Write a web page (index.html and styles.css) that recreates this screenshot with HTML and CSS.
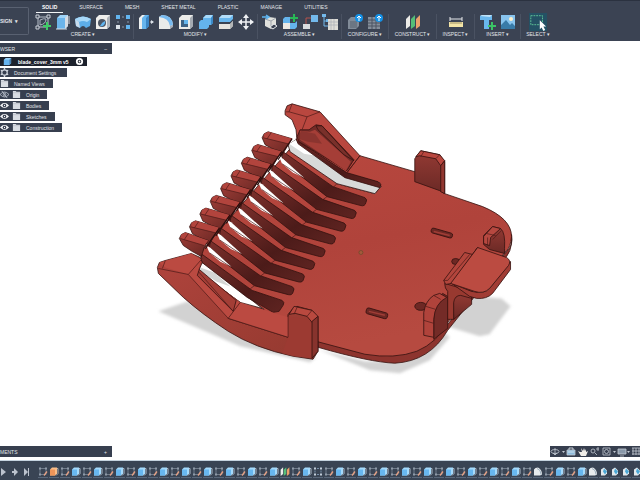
FILE: index.html
```html
<!DOCTYPE html>
<html lang="en">
<head>
<meta charset="utf-8">
<title>blade_cover_3mm v5</title>
<link rel="stylesheet" href="styles.css">
</head>
<body>
<svg class="defs" aria-hidden="true">
  <defs>
    <linearGradient id="plateFill" x1="0" y1="0" x2="0.3" y2="1"><stop offset="0" stop-color="#b9483f"/><stop offset="0.55" stop-color="#b0433b"/><stop offset="1" stop-color="#b64a40"/></linearGradient>
    <linearGradient id="sideFill" x1="0" y1="0" x2="1" y2="1"><stop offset="0" stop-color="#7c302c"/><stop offset="0.6" stop-color="#4c1b19"/><stop offset="1" stop-color="#5f2421"/></linearGradient>
    <linearGradient id="postFill" x1="0" y1="0" x2="0" y2="1"><stop offset="0" stop-color="#943a34"/><stop offset="1" stop-color="#6a2925"/></linearGradient>
    <linearGradient id="toothFill" x1="0" y1="0" x2="1" y2="1"><stop offset="0" stop-color="#a03e38"/><stop offset="1" stop-color="#662622"/></linearGradient>
    <linearGradient id="armFill" x1="0" y1="0" x2="1" y2="1"><stop offset="0" stop-color="#b0443d"/><stop offset="1" stop-color="#93392f"/></linearGradient>
    <filter id="soft" x="-10%" y="-20%" width="120%" height="140%"><feGaussianBlur stdDeviation="1.5"/></filter>

    <symbol id="sketch" viewBox="0 0 16 16"><path d="M3 3H13V13H3Z" fill="none" stroke="#b9c0cb"/><path d="M5 11V6Q9 4 11 5Q11 10 5 11Z" fill="none" stroke="#aab2be"/><path d="M1 1h3v3H1zM12 1h3v3h-3zM1 12h3v3H1z" fill="#3b4353" stroke="#cbd0d8"/><path d="M12 8v8M8 12h8" stroke="#3fcb67" stroke-width="2"/></symbol>
    <symbol id="extrude" viewBox="0 0 16 16"><path d="M2 4L5 1H13V12L10 15H2Z" fill="#9ed3f7"/><path d="M2 4H10V15H2Z" fill="#6bb4ea"/><path d="M10 4L13 1V12L10 15Z" fill="#d5dce4"/><path d="M1 15H12M14 2V10" stroke="#d9dfe7"/></symbol>
    <symbol id="revolve" viewBox="0 0 16 16"><path d="M0 5Q8 0 16 5L15 12L11 14Q8 10 5 14L1 12Z" fill="#5dade8"/><path d="M0 5Q8 0 16 5L12 8Q8 6 4 8Z" fill="#a7d8f8"/><path d="M0 5L4 8L5 14L1 12Z" fill="#c9dcec"/></symbol>
    <symbol id="hole" viewBox="0 0 16 16"><path d="M1 4L4 1H15V12L12 15H1Z" fill="#eeeeec"/><path d="M12 4L15 1V12L12 15Z" fill="#aeb4bb"/><circle cx="7" cy="9" r="4" fill="#4d5664"/><path d="M5 12a4 4 0 0 0 5-5Q7 8 5 12" fill="#62b5ef"/></symbol>
    <symbol id="pattern" viewBox="0 0 16 16"><path d="M3 3H13M3 13H13M3 3V13M13 3V13" stroke="#8d98a8" stroke-dasharray="2 2"/><path d="M1 1h4v4H1zM11 1h4v4h-4zM11 11h4v4h-4z" fill="#63b5ef"/><path d="M1 11h4v4H1z" fill="#dce2e9"/></symbol>
    <symbol id="presspull" viewBox="0 0 16 16"><path d="M1 4L4 1H7V12L4 15H1Z" fill="#ecefef"/><path d="M4 4L7 1H11V12L8 15H4Z" fill="#67b5ed"/><path d="M8 4L11 1V12L8 15Z" fill="#3b86c6"/><path d="M12 8h3" stroke="#dce2e9"/><path d="M13 6l3 2l-3 2z" fill="#dce2e9"/></symbol>
    <symbol id="fillet" viewBox="0 0 16 16"><path d="M1 3L4 1Q14 1 15 11L12 15H1Z" fill="#e9ebea"/><path d="M1 3L4 1Q14 1 15 11L12 12Q11 4 1 3Z" fill="#77baf0"/><path d="M12 12L15 11V13L12 15Z" fill="#a6adb7"/></symbol>
    <symbol id="shell" viewBox="0 0 16 16"><path d="M1 4L4 1H15V12L12 15H1Z" fill="#ecece9"/><path d="M12 4L15 1V12L12 15Z" fill="#a5abb2"/><path d="M3 6H10V13H3Z" fill="#3e6385"/><path d="M6 6H10V10H6Z" fill="#67b7ed"/></symbol>
    <symbol id="combine" viewBox="0 0 16 16"><path d="M5 4L8 1H15V9L13 11H11V13L9 15H1V8L3 6H5Z" fill="#64b4ed"/><path d="M5 4L8 1H15L13 4Z" fill="#a8d9f9"/><path d="M13 4L15 1V9L13 11Z" fill="#3b8ac8"/></symbol>
    <symbol id="offset" viewBox="0 0 16 16"><path d="M1 4L4 1H15V5L12 8H1Z" fill="#69b7ee"/><path d="M1 4L4 1H15L12 4Z" fill="#b3ddf8"/><path d="M1 10H12L15 7V12L12 15H1Z" fill="#e6e4df"/><path d="M12 10L15 7V12L12 15Z" fill="#b3b5b6"/></symbol>
    <symbol id="move" viewBox="0 0 16 16"><path d="M8 2V14M2 8H14" stroke="#eff1f4" stroke-width="1.5"/><path d="M8 0l3 4H5zM8 16l3-4H5zM0 8l4-3v6zM16 8l-4-3v6z" fill="#eff1f4"/></symbol>
    <symbol id="joint" viewBox="0 0 16 16"><path d="M3 5L7 3L14 4V11L9 15L3 12Z" fill="#e0e1dd"/><path d="M3 5L9 7L14 4M9 7V14" fill="none" stroke="#9da3ab"/><path d="M0 3h6M4 1l3 2l-3 2" fill="none" stroke="#5fb5f0" stroke-width="1.5"/><path d="M8 13l4-3l3 2l-4 3z" fill="#3b4353" stroke="#e5e8eb"/></symbol>
    <symbol id="newcomp" viewBox="0 0 16 16"><path d="M1 5L3 3H8V9H13L15 7V13L13 15H1Z" fill="#65b4ec"/><path d="M1 9H8V15H1Z" fill="#ece9e3"/><path d="M12 0V8M8 4H16" stroke="#29b856" stroke-width="2"/></symbol>
    <symbol id="link" viewBox="0 0 16 16"><path d="M4 11V4H9" fill="none" stroke="#b5524c"/><path d="M9 1h7v7H9z" fill="#73b9eb"/><path d="M1 10h7v5H1z" fill="#d9dce0"/></symbol>
    <symbol id="bom" viewBox="0 0 16 16"><path d="M2 2V12H6M2 7H6" fill="none" stroke="#73b9eb"/><path d="M0 0h4v3H0zM4 5h3v3H4z" fill="#73b9eb"/><path d="M6 5h10v11H6z" fill="#deddd7"/><path d="M6 8H16M6 11H16M9 5V16M12 5V16" stroke="#a9aeb4" stroke-width=".7"/></symbol>
    <symbol id="config" viewBox="0 0 16 16"><path d="M1 6L4 3H12V12L9 15H1Z" fill="#818b98"/><path d="M3 7H10V14H3Z" fill="#6c7683"/><circle cx="12" cy="4" r="4" fill="#1591e6"/><path d="M12 7V2M10 4l2-2l2 2" fill="none" stroke="#fff"/></symbol>
    <symbol id="table" viewBox="0 0 16 16"><path d="M1 3H13V15H1Z" fill="#858e9a"/><path d="M1 6H13M1 9H13M1 12H13M5 3V15M9 3V15" stroke="#4c5563"/><circle cx="12" cy="4" r="4" fill="#1591e6"/><path d="M12 7V2M10 4l2-2l2 2" fill="none" stroke="#fff"/></symbol>
    <symbol id="plane" viewBox="0 0 16 16"><path d="M1 5L5 1V12L1 15Z" fill="#ecece8"/><path d="M6 5L10 1V12L6 15Z" fill="#54be77"/><path d="M11 5L15 1V12L11 15Z" fill="#eaa06b"/></symbol>
    <symbol id="measure" viewBox="0 0 16 16"><path d="M2 5H14M2 3V7M14 3V7" stroke="#e6e9ec"/><path d="M1 8H15V13H1Z" fill="#f3e4a6"/><path d="M3 8v2M5 8v2M7 8v2M9 8v2M11 8v2M13 8v2" stroke="#786f4b" stroke-width=".7"/></symbol>
    <symbol id="insert" viewBox="0 0 16 16"><path d="M0 2L2 1H12V6H9V15H4V6H0Z" fill="#69b6ec"/><path d="M0 2L2 1H12L10 3Z" fill="#bee2f8"/><path d="M12 8V16M8 12H16" stroke="#3bc565" stroke-width="2"/></symbol>
    <symbol id="image" viewBox="0 0 16 16"><path d="M1 1H15V15H1Z" fill="#88c4ee"/><path d="M1 11L6 6L10 11L12 9L15 12V15H1Z" fill="#397ba8"/><circle cx="11" cy="5" r="2" fill="#fff1cb"/></symbol>
    <symbol id="select" viewBox="0 0 20 20"><path d="M0 0H20V20H0Z" fill="#245164"/><path d="M2 3H15V13H2Z" fill="none" stroke="#63cb9a" stroke-dasharray="2 1"/><path d="M12 8V18L14 16L16 20L18 19L16 15H19Z" fill="#fff"/></symbol>

    <symbol id="cube" viewBox="0 0 10 10"><path d="M1 3L3 1H9V7L7 9H1Z" fill="#9ad2fb"/><path d="M1 3H7V9H1Z" fill="#66b4f0"/><path d="M7 3L9 1V7L7 9Z" fill="#4380b3"/></symbol>
    <symbol id="target" viewBox="0 0 10 10"><circle cx="5" cy="5" r="3" fill="#1b202b" stroke="#fff" stroke-width="2"/><circle cx="5" cy="5" r="1" fill="#fff"/></symbol>
    <symbol id="gear" viewBox="0 0 10 10"><circle cx="5" cy="5" r="3" fill="none" stroke="#cfd4dc" stroke-width="1.3"/><path d="M5 0V2M5 8V10M1 2.500L2.500 3.500M7.500 6.500L9 7.500M1 7.500L2.500 6.500M7.500 3.500L9 2.500" stroke="#cfd4dc" stroke-width="1.500"/></symbol>
    <symbol id="folder" viewBox="0 0 10 10"><path d="M1 1H4L5 2H9V9H1Z" fill="#d9dde3"/><path d="M1 3H9" stroke="#a5adb8" stroke-width=".5"/></symbol>
    <symbol id="eye" viewBox="0 0 10 10"><path d="M0 5Q5-.5 10 5Q5 10.500 0 5Z" fill="#f4f5f7"/><circle cx="5" cy="5" r="2" fill="#30384a"/><circle cx="5" cy="5" r=".7" fill="#fff"/></symbol>
    <symbol id="eyeoff" viewBox="0 0 10 10"><path d="M0 5Q5-.5 10 5Q5 10.500 0 5Z" fill="none" stroke="#b4bbc6"/><circle cx="5" cy="5" r="1.500" fill="none" stroke="#b4bbc6"/><path d="M2 1L8 9" stroke="#b4bbc6"/></symbol>

    <symbol id="t-sketch" viewBox="0 0 10 10"><path d="M2 2H8V8H2Z" fill="none" stroke="#6f7b8a"/><path d="M1 1h2v2H1zM7 1h2v2H7zM1 7h2v2H1z" fill="#8e99a7"/><path d="M6 9L9 5" stroke="#e8a184" stroke-width="1.300"/></symbol>
    <symbol id="t-extrude" viewBox="0 0 10 10"><path d="M1 3L3 1H8V7L6 9H1Z" fill="#a5dafb"/><path d="M1 3H6V9H1Z" fill="#68b7ef"/><path d="M8 2H9V7L7 9" fill="none" stroke="#aebbc9"/></symbol>
    <symbol id="t-first" viewBox="0 0 10 10"><path d="M1 3L3 1H8V7L6 9H1Z" fill="#f9bd88"/><path d="M1 3H6V9H1Z" fill="#ee9559"/><path d="M8 2H9V7L7 9" fill="none" stroke="#b4aaa3"/></symbol>
    <symbol id="t-pattern" viewBox="0 0 10 10"><path d="M1 1h2v2H1zM7 1h2v2H7zM1 7h2v2H1zM7 7h2v2H7z" fill="#c0cbd8"/><path d="M4 2h2M4 8h2M2 4v2M8 4v2" stroke="#7890aa"/></symbol>
    <symbol id="t-fillet" viewBox="0 0 10 10"><path d="M1 3Q2 1 5 1Q9 3 9 8L7 9H1Z" fill="#e7ebed"/><path d="M4 2Q8 3 8 8" fill="none" stroke="#9fb2c1"/></symbol>
    <symbol id="t-chamfer" viewBox="0 0 10 10"><path d="M2 3L5 1L8 4V7L6 9H2Z" fill="#e1e9ed"/><path d="M5 2L8 5L6 8L4 5Z" fill="#4aa8d6"/></symbol>

    <g id="tooth">
      <path class="edge" d="M283 152L333 187L365 198Q368 200 366 203Q365 207 361 206L327 197L303 178L282 158Z" fill="url(#sideFill)"/>
      <path d="M279 157L283 159L304 178L293 173L282 164Z" fill="#fff"/>
      <path class="thin" d="M327 197L323 200M282 164L303 178"/>
      <path class="edge" d="M262 138L264 134L268 132L292 139L287 147L281 157L276 151L265 145Z" fill="url(#toothFill)"/>
      <path d="M264 134L268 132L292 139L288 144L264 138Z" fill="#b2443d"/>
      <path class="thin" d="M263 138L288 144M271 133L267 139"/>
      <path d="M292 139L283 152L278 160" fill="none" stroke="#2b0d0c" stroke-width="1.2"/>
    </g>
  </defs>
</svg>

<div class="app">
  <header class="toolbar">
    <button class="workspace">SIGN <span class="caret">▾</span></button>
    <div class="ribbon">
      <nav class="tabs">
        <a class="tab active" href="#solid">SOLID</a><a class="tab" href="#surface">SURFACE</a><a class="tab" href="#mesh">MESH</a><a class="tab" href="#sheet">SHEET METAL</a><a class="tab" href="#plastic">PLASTIC</a><a class="tab" href="#manage">MANAGE</a><a class="tab" href="#utilities">UTILITIES</a>
      </nav>
      <div class="groups">
        <section class="group"><div class="tools"><svg><use href="#sketch"/></svg><svg><use href="#extrude"/></svg><svg><use href="#revolve"/></svg><svg><use href="#hole"/></svg><svg><use href="#pattern"/></svg></div><button class="menu">CREATE <span class="caret">▾</span></button></section>
        <section class="group"><div class="tools"><svg><use href="#presspull"/></svg><svg><use href="#fillet"/></svg><svg><use href="#shell"/></svg><svg><use href="#combine"/></svg><svg><use href="#offset"/></svg><svg><use href="#move"/></svg></div><button class="menu">MODIFY <span class="caret">▾</span></button></section>
        <section class="group"><div class="tools"><svg><use href="#joint"/></svg><svg><use href="#newcomp"/></svg><svg><use href="#link"/></svg><svg><use href="#bom"/></svg></div><button class="menu">ASSEMBLE <span class="caret">▾</span></button></section>
        <section class="group"><div class="tools"><svg><use href="#config"/></svg><svg><use href="#table"/></svg></div><button class="menu">CONFIGURE <span class="caret">▾</span></button></section>
        <section class="group"><div class="tools"><svg><use href="#plane"/></svg></div><button class="menu">CONSTRUCT <span class="caret">▾</span></button></section>
        <section class="group"><div class="tools"><svg><use href="#measure"/></svg></div><button class="menu">INSPECT <span class="caret">▾</span></button></section>
        <section class="group"><div class="tools"><svg><use href="#insert"/></svg><svg><use href="#image"/></svg></div><button class="menu">INSERT <span class="caret">▾</span></button></section>
        <section class="group"><div class="tools"><svg class="wide"><use href="#select"/></svg></div><button class="menu">SELECT <span class="caret">▾</span></button></section>
      </div>
    </div>
  </header>

  <main class="canvas">
    <svg class="model" viewBox="0 41 640 420" role="img">
      <g fill="#d2d2d2" filter="url(#soft)">
        <path d="M158 312L187 302L250 334L292 352L316 358L310 363L240 347Z"/>
        <path d="M318 350L365 362L405 362L446 334L450 338L430 361L400 374L370 371Z"/>
        <path d="M448 326L466 296L502 299L511 307L490 335L480 337L450 328Z"/>
      </g>
      <!-- plate underside and rim -->
      <path class="edge" fill="#8d342e" d="M316 338L360 351Q415 362 448 325L507 252Q514 246 512 235V244Q511 252 507 257L448 331Q430 362 395 364Q370 363 318 348Z"/>
      <!-- plate and fingers -->
      <path class="edge" fill="url(#plateFill)" d="M290 149L337 184L375 194L381 187L380 183L347 174L334 162L360 156L415 172L445 194L483 207Q512 219 512 237Q511 248 507 251L448 323Q438 343 417 352Q395 360 365 355L316 342L288 338L228 319L240 303L264 310L202 263L200 253Z"/>
      <path fill="#d8dad9" class="edge" d="M288 145L296 140L347 174L378 183L381 187L375 194L337 184L290 152Z"/>
      <path fill="#fff" d="M289 144L296 140L322 157L304 154Z"/>
      <path class="edge" fill="url(#sideFill)" d="M296 139L347 173L378 182L381 185L380 188L345 178L298 144Z"/>
      <path class="thin" d="M337 184L333 188"/>
      <g>
        <use href="#tooth"/>
        <use href="#tooth" transform="translate(-10.400 12.750)"/>
        <use href="#tooth" transform="translate(-20.800 25.500)"/>
        <use href="#tooth" transform="translate(-31.200 38.250)"/>
        <use href="#tooth" transform="translate(-41.600 51)"/>
        <use href="#tooth" transform="translate(-52 63.750)"/>
        <use href="#tooth" transform="translate(-62.400 76.500)"/>
        <use href="#tooth" transform="translate(-72.800 89.250)"/>
      </g>
      <!-- front slot and last tooth -->
      <path fill="#fff" class="edge" d="M198 262L206 265L262 309L240 303L199 273Z"/>
      <path fill="#d4d6d5" d="M200 268L214 273L230 287L216 282L200 272Z"/>
      <path class="edge" fill="url(#sideFill)" d="M202 255L252 291L282 301Q285 303 283 306L279 312L273 313L247 298L203 264L200 260Z"/>
      <path class="edge" fill="url(#toothFill)" d="M179 239L181 235L185 233L208 241L204 248L201 257L192 252L183 246Z"/>
      <path fill="#b2443d" d="M181 235L185 233L208 241L204 246L180 239Z"/>
      <path class="thin" d="M180 239L204 246M188 234L184 240"/>
      <!-- rear arm -->
      <path class="edge" fill="#b9473f" d="M285 111L287 106L292 104L320 112L360 156L347 173L297 141L296 130L292 120L285 115Z"/>
      <path class="edge" fill="#732b27" d="M297 137L300 130L309 130L316 125L322 126L354 160L347 171L299 142Z"/>
      <path fill="#a53e37" d="M300 131L310 132L315 130L351 162L346 171L300 140Z"/>
      <path fill="#7a2f2a" d="M298 139L301 131L315 134L322 144L308 142Z" opacity=".6"/>
      <path class="edge" fill="#79302a" d="M316 126L322 126L354 161L344 155L318 130Z"/>
      <path class="thin" d="M292 104L289 112L307 117L320 112M307 117L302 130M289 112L286 112M360 156L347 173M297 142L347 177"/>
      <!-- front arm -->
      <path class="edge" fill="url(#armFill)" d="M157 268L159 263L165 261L191 254L200 258L202 263L198 272L240 303L228 319L288 338V315L293 309L297 307L312 311L318 318V352L313 360L293 357Q255 349 228 332Q202 315 183 298L158 274Z"/>
      <path fill="#bb4a41" d="M191 254L201 260L198 270L240 303L228 319L188 275L165 268L159 263Z"/>
      <path class="edge" fill="#a33e36" d="M199 270L236 301L233 312L197 276Z"/>
      <path fill="#bb4a41" d="M240 303L288 318V338L228 319Z"/>
      <path class="thin" d="M158 269L188 275L202 259M188 275L228 319L288 338M240 303L228 319M198 272L233 312M165 261L162 269"/>
      <path fill="#9c3a32" d="M288 317L312 321V359L294 357L282 354L288 338Z"/>
      <path class="edge" fill="#b9493f" d="M289 315L294 307L312 311L318 317L312 323L307 317L295 314Z"/>
      <path class="edge" fill="#87332d" d="M312 322L318 317V352L312 359Z"/>
      <path class="thin" d="M297 308L294 315M312 311L307 317M288 338V316L289 315"/>
      <!-- rear post -->
      <path class="edge" fill="url(#postFill)" d="M415 182V159L421 151L440 155L445 162V194L440 191Z"/>
      <path class="edge" fill="#b9473f" d="M416 157L421 151L440 155L445 161L441 166L436 159L420 156Z"/>
      <path class="edge" fill="#91362f" d="M441 166L445 161V194L441 192Z"/>
      <path class="thin" d="M424 152L421 157M440 155L436 159"/>
      <!-- slots, holes and centre mark -->
      <g class="edge" fill="#6d2824"><rect x="431" y="231" width="22" height="5" rx="2" transform="rotate(16 442 234)"/><rect x="366" y="311" width="22" height="6" rx="2" transform="rotate(16 377 314)"/><ellipse cx="421" cy="307" rx="6" ry="4"/><ellipse cx="456" cy="262" rx="4" ry="3"/></g>
      <path d="M434 232L450 236M369 312L385 316" stroke="#a03d36" stroke-width="1.5"/>
      <circle cx="361" cy="253" r="2" fill="#a35a3b" stroke="#6b4b2b" stroke-width=".7"/>
      <!-- right clip -->
      <path class="edge" fill="url(#postFill)" d="M484 245V236L493 227L501 229Q506 233 505 249V254L490 250Z"/>
      <path class="edge" fill="#b64840" d="M484 237L493 227L501 229L491 238L490 246L484 244Z"/>
      <path class="thin" d="M488 238V246M493 240L502 231M487 234L496 236"/>
      <!-- lower clip -->
      <path class="edge" fill="#742b27" d="M434 337V310Q435 300 443 294L448 297V329L434 340Z"/>
      <path class="edge" fill="#b0433b" d="M424 336V313Q426 301 434 296L440 294L447 298Q435 304 434 320V338Z"/>
      <path class="thin" d="M424 321L434 324M426 307L436 310M434 296L441 300"/>
      <!-- latch tab -->
      <path class="edge" fill="url(#postFill)" d="M453 294L472 297V305L454 320Z"/>
      <path class="edge" fill="#983930" d="M445 284L472 292V299L461 296Q455 296 454 303V320H448V292Q445 289 445 284Z"/>
      <path class="edge" fill="#a13c34" d="M452 284L472 292Q484 295 490 289L511 262V270L493 294Q487 300 477 299L470 297Z"/>
      <path class="edge" fill="#b2453c" d="M444 281L465 253L473 255L478 248L452 284L446 285Z"/>
      <path class="edge" fill="#bb4b41" d="M451 284L478 248L507 258Q512 261 509 266L490 289Q484 295 475 292Z"/>
      <path class="thin" d="M444 281L448 281L470 255"/>
    </svg>

    <aside class="browser">
      <div class="panel-head"><span>WSER</span><span>–</span></div>
      <ul class="tree">
        <li class="root"><svg><use href="#cube"/></svg><b>blade_cover_3mm v5</b><svg><use href="#target"/></svg></li>
        <li><svg><use href="#gear"/></svg>Document Settings</li>
        <li class="views"><svg><use href="#folder"/></svg>Named Views</li>
        <li class="item"><svg><use href="#eyeoff"/></svg><svg><use href="#folder"/></svg>Origin</li>
        <li class="item"><svg><use href="#eye"/></svg><svg><use href="#folder"/></svg>Bodies</li>
        <li class="item"><svg><use href="#eye"/></svg><svg><use href="#folder"/></svg>Sketches</li>
        <li class="item"><svg><use href="#eye"/></svg><svg><use href="#folder"/></svg>Construction</li>
      </ul>
    </aside>

    <div class="comments panel-head"><span>MENTS</span><span>+</span></div>

    <div class="viewbar">
      <svg viewBox="0 0 90 11" fill="none" stroke="#c4cad3" stroke-width=".8">
        <ellipse cx="5" cy="5.500" rx="4" ry="2"/><path d="M5 2V9M3 7l2 2l2-2"/><path d="M12 5h3l-1.500 2z" fill="#c4cad3" stroke="none"/>
        <path d="M17 4H25V9H17Z" fill="#8ebbdc"/><path d="M19 4V2H23V4M18 6H24" stroke="#e4edf4"/>
        <path d="M30 6L28 5L31 10H36L38 5L36 6V3L35 5L34 2L33 5L31 2L32 6Z" fill="#f0ede8" stroke="none"/>
        <circle cx="43" cy="5" r="2"/><path d="M45 7L47 9M46 3H49M48 1V5"/>
        <path d="M53 2H60V9H53Z"/><circle cx="56.500" cy="5.500" r="2"/><path d="M63 5h3l-1.500 2z" fill="#c4cad3" stroke="none"/>
        <path d="M68 3H76V8H68Z" fill="#8a99aa"/><path d="M70 10H74"/><path d="M77 5h3l-1.500 2z" fill="#c4cad3" stroke="none"/>
        <path d="M82 2H90M82 5H90M82 8H90M83 2V9M86 2V9M89 2V9"/>
      </svg>
    </div>
  </main>

  <footer class="timeline">
    <svg class="playback" viewBox="0 0 32 10" fill="#bcc3ce"><path d="M1 1L6 5L1 9ZM12 4H14V1L18 5L14 9V6H12ZM24 1L28 5L24 9ZM28 1H29V9H28Z"/></svg>
    <div class="features" id="features"></div>
  </footer>
</div>
<script src="timeline.js"></script>
</body>
</html>
```
FILE: styles.css
```css
* { box-sizing: border-box; }
body { margin: 0; background: #fff; color: #e2e5ea; font: 5px/8px "Liberation Sans", Arial, sans-serif; }
button { font: inherit; color: inherit; background: none; border: 0; padding: 0; }
svg { display: block; flex: none; }
.defs { position: absolute; width: 0; height: 0; }
.app { display: grid; grid-template-rows: auto 1fr auto; height: 100vh; overflow: hidden; }

.toolbar { display: flex; align-items: flex-start; height: 41px; background: #3b4353; border-top: 1px solid #2b3240; }
.workspace { flex: none; width: 29px; height: 28px; margin: 6px 4px 0 0; text-align: left; border: 1px solid #596171; border-left: 0; border-radius: 0 2px 2px 0; font-weight: bold; }
.workspace .caret { margin-left: 1px; }
.ribbon { flex: 1; min-width: 0; }
.tabs { display: flex; gap: 22px; height: 12px; padding: 2px 0 0 9px; }
.tab { color: inherit; text-decoration: none; white-space: nowrap; }
.tab.active { color: #fff; font-weight: bold; margin: 0 -6px; padding: 0 6px; height: 10px; border-bottom: 1px solid #f2f4f6; }
.groups { display: grid; grid-template-columns: 101px 124px 84px 47px 48px 38px 46px 34px; padding-top: 1px; }
.group { display: flex; flex-direction: column; align-items: center; height: 25px; border-right: 1px solid #4a5262; }
.group:last-child { border-right: 0; }
.tools { display: flex; align-items: center; gap: 4px; height: 16px; }
.tools svg { width: 16px; height: 16px; }
.tools .wide { width: 18px; height: 18px; }
.menu { height: 8px; white-space: nowrap; }
.caret { font-size: 5px; }

.canvas { position: relative; min-height: 0; background: #fff; }
.model { width: 100%; height: 100%; }
.edge { stroke: #35110f; stroke-width: .8; stroke-linejoin: round; }
.thin { fill: none; stroke: #4d1a17; stroke-width: .7; }

.panel-head { display: flex; justify-content: space-between; align-items: center; width: 112px; height: 11px; padding: 0 5px 0 0; background: #373f4f; }
.browser { position: absolute; left: 0; top: 2px; }
.tree { display: flex; flex-direction: column; align-items: flex-start; gap: 2px; margin: 3px 0 0; padding: 0; list-style: none; }
.tree li { display: flex; align-items: center; gap: 5px; height: 9px; padding-right: 11px; background: #373f4f; white-space: nowrap; }
.tree svg { width: 9px; height: 9px; }
.tree .root { gap: 6px; padding: 0 3px 0 3px; background: #1d222d; color: #fff; }
.tree .views { padding-right: 8px; }
.tree .item { gap: 3px; padding-right: 8px; }
.tree .item svg + svg { margin-right: 2px; }
.comments { position: absolute; left: 0; bottom: 3px; }
.viewbar { position: absolute; right: 0; bottom: 3px; width: 90px; height: 11px; background: #373f4f; }

.timeline { display: flex; align-items: center; height: 20px; padding-top: 2px; overflow: hidden; background: #394454; border-top: 1px solid #c5d3df; }
.playback { width: 32px; height: 10px; }
.features { display: flex; gap: 1px; margin-left: 6px; }
.features svg { width: 10px; height: 12px; border-bottom: 1px solid #59677a; }
```
FILE: timeline.js
```js
const special = { 1: "first", 22: "plane", 25: "pattern", 45: "fillet", 50: "fillet" };

function featureAt(i) {
  if (special[i]) return "t-" + special[i];
  if (i > 50) return "t-chamfer";
  const sketchFirst = i < 22 || (i > 25 && i < 50);
  if (sketchFirst) return i % 2 ? "t-extrude" : "t-sketch";
  return i % 2 ? "t-sketch" : "t-extrude";
}

const row = document.getElementById("features");
for (let i = 0; i < 55; i++) {
  const id = featureAt(i) === "t-plane" ? "plane" : featureAt(i);
  row.insertAdjacentHTML("beforeend", `<svg><use href="#${id}"/></svg>`);
}
```
